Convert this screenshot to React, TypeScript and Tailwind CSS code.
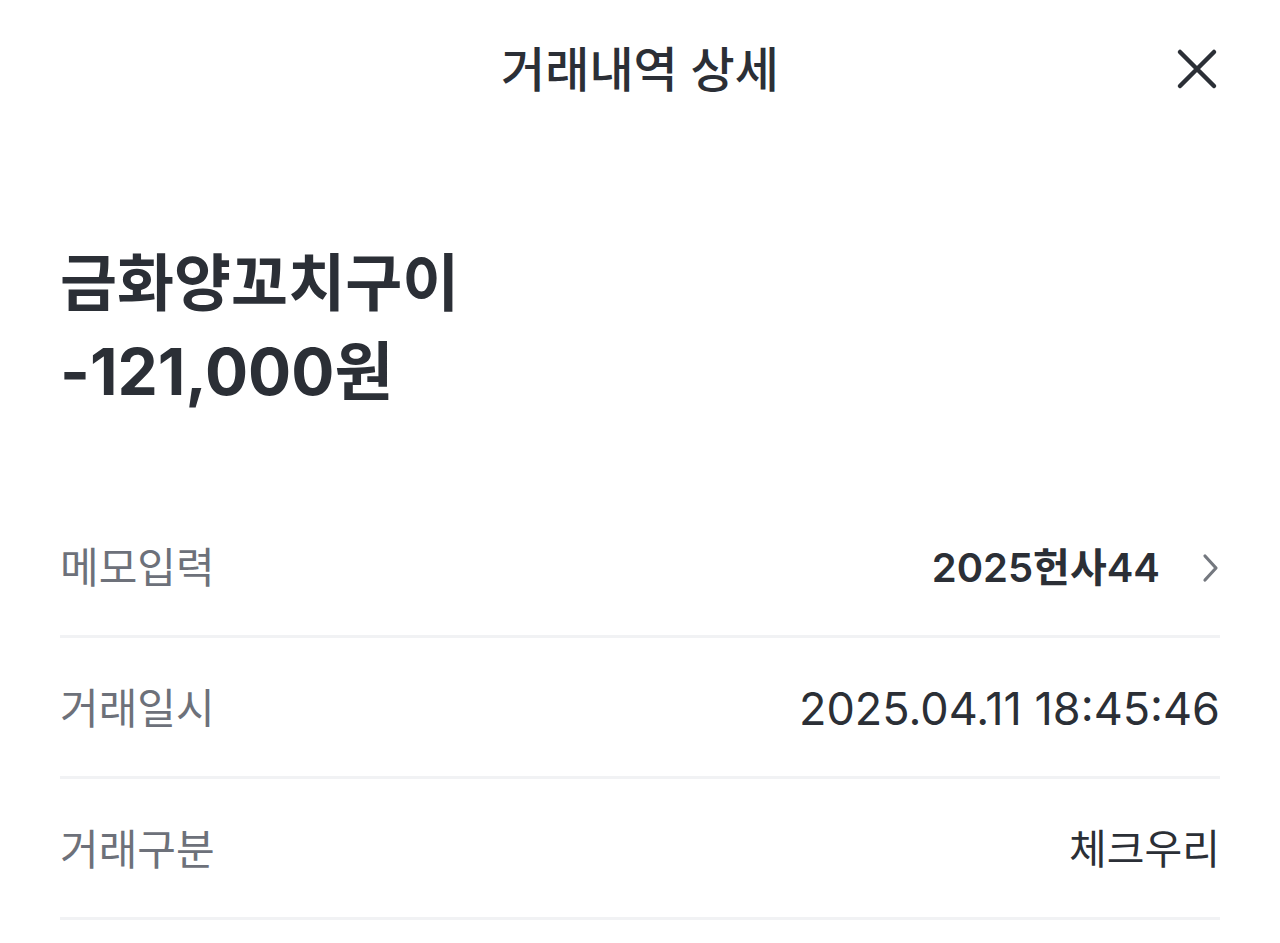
import React from "react";

const font = { fontFamily: 'Inter, "Noto Sans CJK KR", sans-serif' };

function Row({ label, children }: { label: string; children: React.ReactNode }) {
  return (
    <div className="flex h-[141px] items-center justify-between border-b-[3px] border-[#f1f2f4] pt-[3px]">
      <span className="text-[42px] text-[#6d717a]">{label}</span>
      <div className="flex items-center">{children}</div>
    </div>
  );
}

export default function App() {
  return (
    <div className="min-h-[943px] w-[1280px] bg-white" style={font}>
      <div className="relative flex h-[140px] items-center justify-center">
        <span className="text-[48px] font-medium text-[#2b2f36]">거래내역 상세</span>
        <svg className="absolute right-[62px] top-[48px]" width="42" height="42" viewBox="0 0 42 42" fill="none">
          <path d="M4 4 L38 38 M38 4 L4 38" stroke="#2b2f36" strokeWidth="4.5" strokeLinecap="round" />
        </svg>
      </div>
      <div className="px-[60px]">
        <div className="mt-[100px] font-bold leading-[88px] text-[#2b2f36]">
          <div className="text-[62px]">금화양꼬치구이</div>
          <div className="text-[64px]">-121,000원</div>
        </div>
        <div className="mt-[81px]">
          <Row label="메모입력">
            <span className="text-[40px] font-semibold text-[#2b2f36]">2025헌사44</span>
            <svg className="ml-[40px] mr-[-2px]" width="22" height="32" viewBox="0 0 22 32" fill="none">
              <path d="M5 4 L16 16 L5 28" stroke="#74787f" strokeWidth="3.2" strokeLinecap="round" strokeLinejoin="round" />
            </svg>
          </Row>
          <Row label="거래일시">
            <span className="text-[45px] font-normal text-[#2b2f36]">2025.04.11 18:45:46</span>
          </Row>
          <Row label="거래구분">
            <span className="text-[41px] font-normal text-[#2b2f36]">체크우리</span>
          </Row>
        </div>
      </div>
    </div>
  );
}
